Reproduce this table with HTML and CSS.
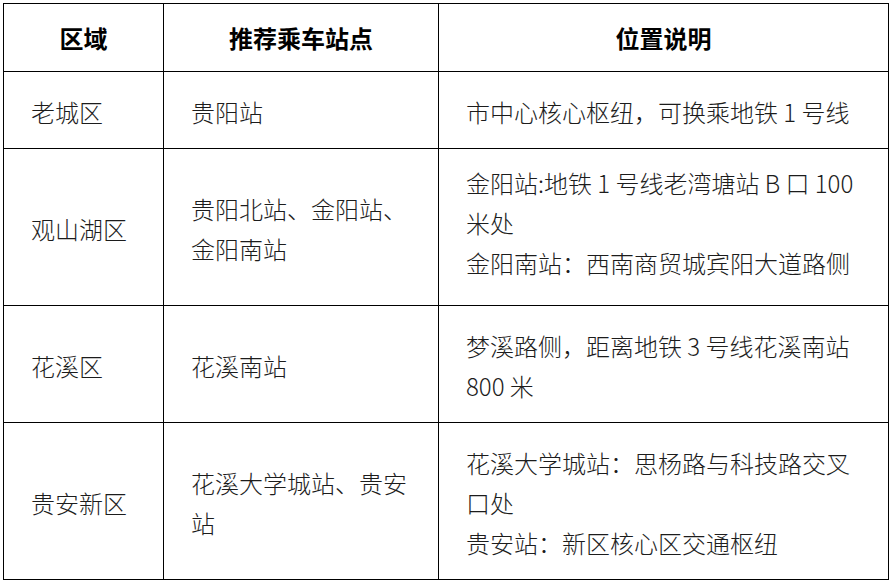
FILE: index.html
```html
<!DOCTYPE html>
<html lang="zh-CN">
<head>
<meta charset="utf-8">
<title>推荐乘车站点</title>
<link rel="stylesheet" href="styles.css">
</head>
<body>
<table class="stations">
  <colgroup>
    <col class="c-area">
    <col class="c-station">
    <col class="c-desc">
  </colgroup>
  <thead>
    <tr class="row-head">
      <th>区域</th>
      <th>推荐乘车站点</th>
      <th>位置说明</th>
    </tr>
  </thead>
  <tbody>
    <tr class="row-1">
      <td>老城区</td>
      <td>贵阳站</td>
      <td>市中心核心枢纽，可换乘地铁 1 号线</td>
    </tr>
    <tr class="row-2">
      <td>观山湖区</td>
      <td>贵阳北站、金阳站、<br>金阳南站</td>
      <td class="desc-top">金阳站:地铁 1 号线老湾塘站 B 口 100<br>米处<br>金阳南站：西南商贸城宾阳大道路侧</td>
    </tr>
    <tr class="row-3">
      <td>花溪区</td>
      <td>花溪南站</td>
      <td>梦溪路侧，距离地铁 3 号线花溪南站<br>800 米</td>
    </tr>
    <tr class="row-4">
      <td>贵安新区</td>
      <td>花溪大学城站、贵安<br>站</td>
      <td>花溪大学城站：思杨路与科技路交叉<br>口处<br>贵安站：新区核心区交通枢纽</td>
    </tr>
  </tbody>
</table>
</body>
</html>
```

FILE: styles.css
```css
html, body {
  margin: 0;
  padding: 0;
  background: #ffffff;
}

body {
  padding: 3px 0 0 3px;
  font-family: "Noto Sans CJK SC", "Noto Sans", sans-serif;
  color: #1c1c1c;
}

.stations {
  border-collapse: collapse;
  table-layout: fixed;
  width: 885px;
}

.c-area { width: 160px; }
.c-station { width: 275px; }
.c-desc { width: 450px; }

.stations th,
.stations td {
  border: 1.5px solid #000;
  font-size: 24px;
  line-height: 40px;
  white-space: nowrap;
  vertical-align: middle;
}

.stations th {
  font-weight: 700;
  color: #000;
  text-align: center;
  padding: 0;
}

.stations td {
  font-weight: 300;
  text-align: left;
  padding: 4px 0 0 27px;
}

.row-head { height: 68px; }
.row-1 { height: 77px; }
.row-2 { height: 157px; }
.row-3 { height: 117px; }
.row-4 { height: 157px; }

.stations td.desc-top {
  padding-top: 0;
  padding-bottom: 8px;
}
```
